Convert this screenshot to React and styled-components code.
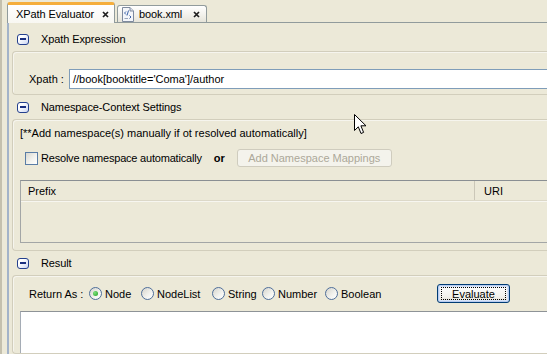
import React from 'react';
import styled, { createGlobalStyle } from 'styled-components';

const Global = createGlobalStyle`
  html, body { margin: 0; padding: 0; background: #ECE9D8; }
  body {
    font-family: "Liberation Sans", Arial, sans-serif;
    font-size: 11px;
    color: #000;
  }
  #root { width: 547px; height: 354px; }
`;

const Window = styled.div`
  position: relative;
  width: 547px;
  height: 354px;
  overflow: hidden;
  display: flex;
  background: #ECE9D8;
`;

const SideStrip = styled.div`
  flex: none;
  width: 7px;
  box-sizing: border-box;
  border-left: 2px solid #C4C0AE;
`;

const Main = styled.div`
  flex: none;
  width: 660px;
  display: flex;
  flex-direction: column;
`;

const TabBar = styled.div`
  flex: none;
  height: 23px;
  box-sizing: border-box;
  display: flex;
  align-items: flex-end;
  gap: 2px;
  border-bottom: 1px solid #919B9C;
`;

const Tab = styled.div`
  box-sizing: border-box;
  width: ${p => p.$w}px;
  height: ${p => (p.$active ? 21 : 17)}px;
  margin-bottom: ${p => (p.$active ? -1 : 0)}px;
  position: relative;
  display: flex;
  align-items: center;
  gap: 5px;
  padding: ${p => (p.$active ? '0 5px 0 8px' : '0 6px 0 4px')};
  border: 1px solid #919B9C;
  border-bottom: none;
  border-top: ${p => (p.$active ? '3px solid #F5AE3C' : '1px solid #919B9C')};
  border-radius: 3px 3px 0 0;
  background: ${p => (p.$active
    ? 'linear-gradient(#FFFFFF, #F8F7F2)'
    : 'linear-gradient(#FFFFFF, #F1F0EA 60%, #E6E4DA)')};
  font-size: 11px;
  letter-spacing: -0.1px;
`;

const TabLabel = styled.span`
  flex: 1;
  white-space: nowrap;
`;

const Content = styled.div`
  flex: 1;
  display: flex;
  flex-direction: column;
  border-left: 2px solid #A3B3C9;
  padding: 4px 0 0 3px;
`;

const SectionHeader = styled.div`
  flex: none;
  height: 24px;
  display: flex;
  align-items: center;
  padding-left: 5px;
  gap: 12px;
  font-size: 11px;
  letter-spacing: -0.1px;
`;

const CollapseIcon = styled.span`
  flex: none;
  box-sizing: border-box;
  width: 12px;
  height: 11px;
  border: 1px solid #24408E;
  border-radius: 3px;
  background: linear-gradient(135deg, #FFFFFF 30%, #CCD6F2);
  display: flex;
  align-items: center;
  justify-content: center;
  &::after {
    content: '';
    width: 6px;
    height: 2px;
    background: #1A2F80;
  }
`;

const Panel = styled.div`
  flex: none;
  box-sizing: border-box;
  height: ${p => (p.$h ? `${p.$h}px` : 'auto')};
  ${p => (p.$grow ? 'flex: 1;' : '')}
  border: 1px solid #D2CEBC;
  border-right: none;
  border-radius: 4px 0 0 4px;
  box-shadow: inset 1px 1px 0 #F6F5EE;
  display: flex;
  flex-direction: column;
  padding: ${p => p.$pad};
`;

const Row = styled.div`
  display: flex;
  align-items: center;
  height: ${p => p.$h}px;
  margin-top: ${p => p.$mt || 0}px;
  padding-left: ${p => p.$pl || 0}px;
`;

const FieldLabel = styled.span`
  flex: none;
  width: ${p => p.$w}px;
  white-space: nowrap;
  font-size: 11px;
`;

const TextField = styled.div`
  flex: 1;
  box-sizing: border-box;
  height: 20px;
  border: 1px solid #7F9DB9;
  border-right: none;
  background: #FFFFFF;
  display: flex;
  align-items: center;
  padding-left: 3px;
  font-size: 11px;
  white-space: nowrap;
`;

const Note = styled.div`
  height: 14px;
  line-height: 14px;
  white-space: nowrap;
  font-size: 11px;
`;

const CheckBox = styled.span`
  flex: none;
  box-sizing: border-box;
  width: 13px;
  height: 13px;
  border: 1px solid #5A7DA6;
  background: linear-gradient(135deg, #D9D8D0, #F4F4F0 60%, #FFFFFF);
`;

const InlineText = styled.span`
  white-space: nowrap;
  margin-left: ${p => p.$ml || 0}px;
  font-weight: ${p => (p.$bold ? 700 : 400)};
  font-size: 11px;
  letter-spacing: ${p => (p.$bold ? 0 : -0.2)}px;
`;

const DisabledButton = styled.span`
  flex: none;
  box-sizing: border-box;
  margin-left: ${p => p.$ml}px;
  width: 155px;
  height: 18px;
  border: 1px solid #CFCCBE;
  border-radius: 3px;
  background: #F4F3EC;
  color: #ACA899;
  display: flex;
  align-items: center;
  justify-content: center;
  font-size: 11px;
`;

const Table = styled.div`
  box-sizing: border-box;
  height: 63px;
  margin-top: 13px;
  border-top: 1px solid #8A8F93;
  border-left: 1px solid #A3A6A6;
  border-bottom: 1px solid #A3A6A6;
  display: flex;
  flex-direction: column;
`;

const TableHead = styled.div`
  display: flex;
  height: 19px;
  border-bottom: 1px solid #DCD8C8;
  box-shadow: 0 1px 0 #F7F6F0;
`;

const HeadCell = styled.div`
  box-sizing: border-box;
  width: ${p => (p.$w ? `${p.$w}px` : 'auto')};
  ${p => (p.$w ? '' : 'flex: 1;')}
  padding-left: ${p => p.$pl}px;
  display: flex;
  align-items: center;
  font-size: 11px;
  border-right: ${p => (p.$w ? '1px solid #CBC7B8' : 'none')};
`;

const RadioItem = styled.label`
  flex: none;
  width: ${p => (p.$w ? `${p.$w}px` : 'auto')};
  display: flex;
  align-items: center;
  gap: 3px;
  font-size: 11px;
  white-space: nowrap;
`;

const RadioDot = styled.span`
  flex: none;
  box-sizing: border-box;
  width: 13px;
  height: 13px;
  border-radius: 50%;
  border: 1px solid #4E6E9A;
  background: linear-gradient(135deg, #D5D4CC, #F3F3EF 60%, #FFFFFF);
  display: flex;
  align-items: center;
  justify-content: center;
  &::after {
    content: '';
    display: ${p => (p.$checked ? 'block' : 'none')};
    width: 5px;
    height: 5px;
    border-radius: 50%;
    background: radial-gradient(circle at 35% 35%, #7EE07E, #21A121);
  }
`;

const PushButton = styled.button`
  flex: none;
  position: relative;
  box-sizing: border-box;
  width: 73px;
  height: 19px;
  padding: 0;
  border: 1px solid #003C74;
  border-radius: 3px;
  background: linear-gradient(#FFFFFF, #F2F1EC 70%, #DCD8CC);
  box-shadow: inset 0 0 0 1px #B8CCF0, inset 0 0 0 2px #D8E4F8;
  font-family: "Liberation Sans", Arial, sans-serif;
  font-size: 11px;
  color: #000;
  &::after {
    content: '';
    position: absolute;
    inset: 2px 3px;
    border: 1px dotted #000;
  }
`;

const ResultArea = styled.div`
  flex: 1;
  margin-top: 8px;
  margin-left: 7px;
  background: #FFFFFF;
  border-top: 1px solid #8E9397;
  border-left: 1px solid #A5ACB5;
`;

const Cursor = styled.svg`
  position: absolute;
  left: 354px;
  top: 114px;
`;

const CloseX = () => (
  <svg width="7" height="7" viewBox="0 0 7 7">
    <path d="M1 1 L6 6 M6 1 L1 6" stroke="#1E1E1E" strokeWidth="1.7" />
  </svg>
);

const XmlFileIcon = () => (
  <svg width="12" height="15" viewBox="0 0 12 15">
    <path d="M0.5 0.5 H8 L11.5 4 V14.5 H0.5 Z" fill="#F4F6FA" stroke="#7E8A9E" />
    <path d="M8 0.5 V4 H11.5" fill="#D8DEE8" stroke="#7E8A9E" />
    <path d="M4 4.5 L2.5 6 L4 7.5" fill="none" stroke="#3D63A8" strokeWidth="1" />
    <path d="M6.5 3.5 L5 8.5" fill="none" stroke="#3D63A8" strokeWidth="1" />
    <path d="M7.5 8.5 L9 10 L7.5 11.5" fill="none" stroke="#3D63A8" strokeWidth="1" />
    <path d="M2.5 11.5 H6" stroke="#9AA6BA" strokeWidth="1" />
  </svg>
);

const radios = [
  { label: 'Node', w: 52, checked: true },
  { label: 'NodeList', w: 71 },
  { label: 'String', w: 50 },
  { label: 'Number', w: 63 },
  { label: 'Boolean', w: 112 },
];

export default function App() {
  return (
    <>
      <Global />
      <Window>
        <SideStrip />
        <Main>
          <TabBar>
            <Tab $active $w={108}>
              <TabLabel>XPath Evaluator</TabLabel>
              <CloseX />
            </Tab>
            <Tab $w={90}>
              <XmlFileIcon />
              <TabLabel>book.xml</TabLabel>
              <CloseX />
            </Tab>
          </TabBar>
          <Content>
            <SectionHeader>
              <CollapseIcon />
              <span>Xpath Expression</span>
            </SectionHeader>
            <Panel $h={44} $pad="17px 0 0 16px">
              <Row $h={20}>
                <FieldLabel $w={40}>Xpath :</FieldLabel>
                <TextField>//book[booktitle='Coma']/author</TextField>
              </Row>
            </Panel>

            <SectionHeader>
              <CollapseIcon />
              <span>Namespace-Context Settings</span>
            </SectionHeader>
            <Panel $h={132} $pad="6px 0 0 7px">
              <Note>[**Add namespace(s) manually if ot resolved automatically]</Note>
              <Row $h={18} $mt={9} $pl={5}>
                <CheckBox />
                <InlineText $ml={3}>Resolve namespace automatically</InlineText>
                <InlineText $ml={12} $bold>or</InlineText>
                <DisabledButton $ml={12}>Add Namespace Mappings</DisabledButton>
              </Row>
              <Table>
                <TableHead>
                  <HeadCell $w={454} $pl={7}>Prefix</HeadCell>
                  <HeadCell $pl={9}>URI</HeadCell>
                </TableHead>
              </Table>
            </Panel>

            <SectionHeader>
              <CollapseIcon />
              <span>Result</span>
            </SectionHeader>
            <Panel $grow $pad="8px 0 0 0">
              <Row $h={19} $pl={16}>
                <FieldLabel $w={60}>Return As :</FieldLabel>
                {radios.map(r => (
                  <RadioItem key={r.label} $w={r.w}>
                    <RadioDot $checked={r.checked} />
                    {r.label}
                  </RadioItem>
                ))}
                <PushButton>Evaluate</PushButton>
              </Row>
              <ResultArea />
            </Panel>
          </Content>
        </Main>
        <Cursor width="13" height="21" viewBox="0 0 13 21">
          <path d="M0.5 0.5 L0.5 16.5 L4.3 12.8 L7 19.5 L9.6 18.4 L6.9 11.8 L12 11.8 Z"
            fill="#FFFFFF" stroke="#000000" strokeWidth="1" strokeLinejoin="miter" />
        </Cursor>
      </Window>
    </>
  );
}
